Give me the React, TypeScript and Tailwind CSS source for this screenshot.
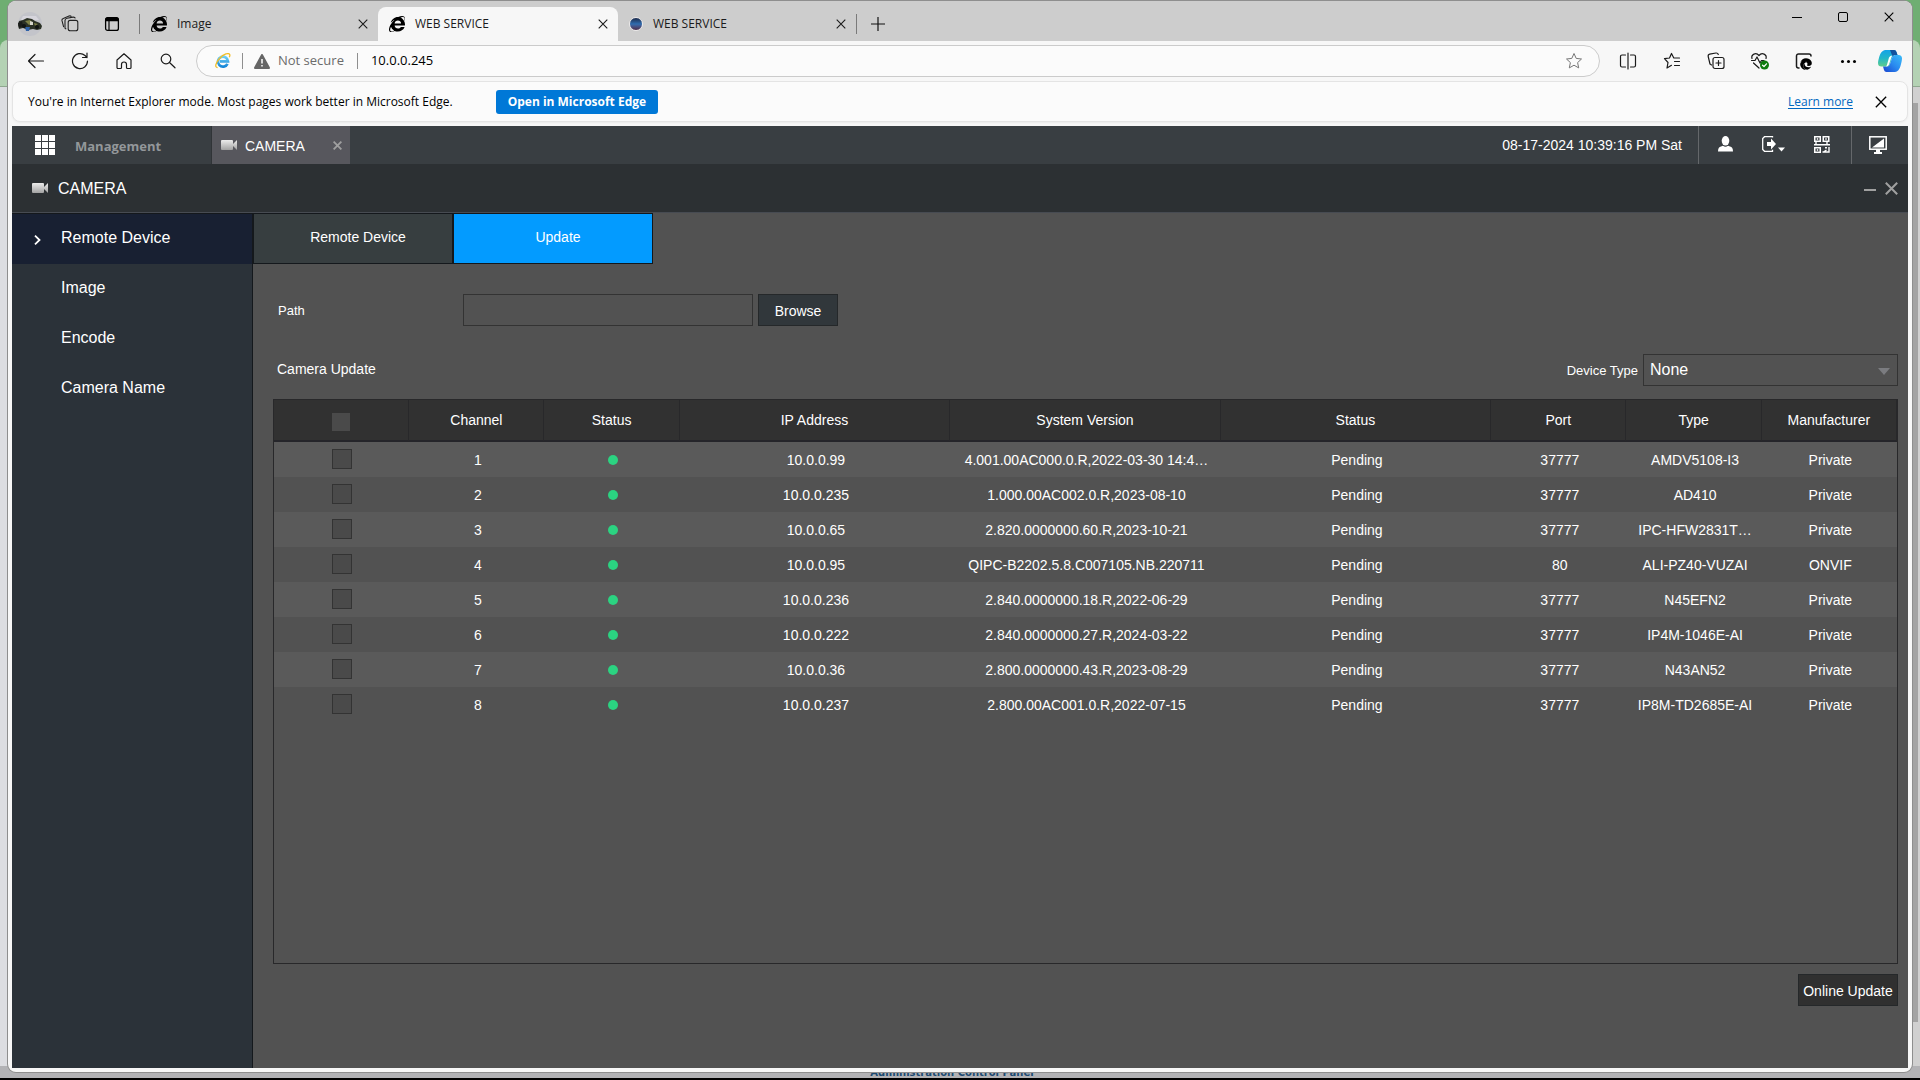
import React from "react";
import { FaInternetExplorer, FaEdge } from "react-icons/fa";

type IconProps = { className?: string };

const Cross = ({ className }: IconProps) => (
  <svg viewBox="0 0 10 10" className={className} fill="none" stroke="currentColor" aria-hidden="true">
    <path d="M.7 .7 9.3 9.3M9.3 .7 .7 9.3" strokeWidth="1.1" />
  </svg>
);

const CameraIcon = () => (
  <svg width="16" height="10" viewBox="0 0 16 10" aria-hidden="true">
    <defs>
      <linearGradient id="cam" x1="0" y1="0" x2="0" y2="1">
        <stop offset="0" stopColor="#ececec" />
        <stop offset="1" stopColor="#a2a2a2" />
      </linearGradient>
    </defs>
    <path d="M1 0h10a1 1 0 0 1 1 1v8a1 1 0 0 1-1 1H1a1 1 0 0 1-1-1V1a1 1 0 0 1 1-1zM12 4l4-4v10l-4-4z" fill="url(#cam)" />
  </svg>
);

const ProfilePicture = () => (
  <svg width="24" height="24" viewBox="0 0 24 24" aria-hidden="true">
    <circle cx="12" cy="12" r="12" fill="#c3c4ca" />
    <path d="M5 4h13l3 4H3z" fill="#d6d5dc" />
    <path d="M5 8l4-2 5 1 3 2 5 2 2 3-1 3-4 1-4-1-5 1-5-2-4 1-1-4 1-4z" fill="#2c3226" />
    <path d="M7 9l5-1 3 3-4 2zM16 11l4 1-3 2z" fill="#7d8046" />
    <path d="M0 11l4-2 1 5-4 2z" fill="#1a1d1a" />
    <path d="M12 9l3 1v3h-3z" fill="#d7d7cc" />
    <path d="M7 15h5l-1 4H8z" fill="#2f62a8" />
    <circle cx="19" cy="15" r="2" fill="#101412" />
    <circle cx="6" cy="14" r="2" fill="#101412" />
  </svg>
);

const Workspaces = () => (
  <svg width="18" height="18" viewBox="0 0 18 18" fill="none" stroke="#222" strokeWidth="1.1" aria-hidden="true">
    <rect x="7.2" y="5.4" width="9.6" height="10.4" rx="2" />
    <path d="M5.2 14.2 4 13.2V5.600a2.400 2.400 0 0 1 2-2.300l6-1.200q2-.2 2.300 1.200" />
    <path d="M2.700 12.200 1 5.700a2 2 0 0 1 1.300-2.300L8 1q1.500-.5 2.500.600" />
  </svg>
);

const TabActions = () => (
  <svg width="16" height="16" viewBox="0 0 16 16" aria-hidden="true">
    <rect x="1.600" y="1.600" width="12.800" height="12.800" rx="2" fill="none" stroke="#000" strokeWidth="1.300" />
    <path d="M1.500 5.200V3a1.500 1.500 0 0 1 1.500-1.500h10a1.500 1.500 0 0 1 1.500 1.500v2.200z" fill="#000" />
    <path d="M5 5v9" stroke="#000" strokeWidth="1.200" />
  </svg>
);

const BlackE = () => <FaInternetExplorer className="size-4 shrink-0 text-black" aria-hidden="true" />;

const BlueE = () => (
  <svg width="16" height="16" viewBox="0 0 16 16" fill="none" aria-hidden="true">
    <defs>
      <linearGradient id="ie" x1="0" y1="0" x2="0" y2="1">
        <stop offset="0" stopColor="#6fd0f6" />
        <stop offset="1" stopColor="#1687d8" />
      </linearGradient>
    </defs>
    <path d="M12.500 10.800A5 5 0 1 1 13 8.300H5" stroke="url(#ie)" strokeWidth="2.700" />
    <path d="M2.600 14.600C-.5 14.500.5 10 4.500 5.500S14-.8 14.800 1.700c.2.800 0 1.700-.5 2.600" stroke="#f2bd27" strokeWidth="1.300" />
  </svg>
);

const Star = ({ className }: IconProps) => (
  <svg width="18" height="18" viewBox="0 0 18 18" fill="none" stroke="currentColor" strokeLinejoin="round" className={className} aria-hidden="true">
    <path d="M9 1.500l2.200 4.900 5.300.6-3.900 3.600 1.100 5.300L9 13.200l-4.700 2.700 1.100-5.300L1.500 7l5.300-.6z" />
  </svg>
);

const I = ({ children, w = 18 }: { children: React.ReactNode; w?: number }) => (
  <svg width={w} height="18" viewBox={`0 0 ${w} 18`} fill="none" stroke="#1b1b1b" strokeWidth="1.200" strokeLinejoin="round" strokeLinecap="round" aria-hidden="true">
    {children}
  </svg>
);

const Copilot = () => (
  <svg width="24" height="24" viewBox="0 0 24 24" aria-hidden="true">
    <defs>
      <linearGradient id="cpA" x1="0" y1="0" x2="0" y2="1">
        <stop offset="0" stopColor="#14a3e8" />
        <stop offset=".5" stopColor="#22b6c8" />
        <stop offset="1" stopColor="#5fce8b" />
      </linearGradient>
      <linearGradient id="cpB" x1="1" y1="0" x2="0" y2="1">
        <stop offset="0" stopColor="#3bbdf8" />
        <stop offset=".5" stopColor="#2a8bf0" />
        <stop offset="1" stopColor="#1844cf" />
      </linearGradient>
    </defs>
    <path d="M7 1h9q2 0 2.500 2L19.500 6H17q-2 0-3 3l-2 6q-1 2.500-3 2.500H3.500Q0 17.500 0 14q0-2 1.500-7T7 1z" fill="url(#cpA)" />
    <path d="M12 1h4q2 0 2.500 2L19.500 6H17q-1.500 0-2.500 1.500z" fill="#14529e" />
    <path d="M17 6h3.500Q24 6 24 9.500q0 2-1.500 7.500T17 23H8.500q-2 0-2.500-2l-1-3.500h4q2 0 3-2.500l2-6q1-3 3-3z" fill="url(#cpB)" />
    <path d="M11 8.500q1-2 3.500-2-1 1-1.500 3l-2 6q-.7 2-3 2 .8-1 1.200-2.500z" fill="#fff" />
  </svg>
);

const qrCorner = (x: number, y: number) => (
  <g key={`${x}-${y}`}>
    <rect x={x + 0.75} y={y + 0.75} width="5.500" height="4.500" fill="none" stroke="#fff" strokeWidth="1.500" />
    <rect x={x + 2.8} y={y + 2.2} width="1.400" height="1.600" fill="#fff" />
  </g>
);

const menu = ["Remote Device", "Image", "Encode", "Camera Name"];

const columns = ["Channel", "Status", "IP Address", "System Version", "Status", "Port", "Type", "Manufacturer"];

const rows = [
  ["10.0.0.99", "4.001.00AC000.0.R,2022-03-30 14:4…", "37777", "AMDV5108-I3", "Private"],
  ["10.0.0.235", "1.000.00AC002.0.R,2023-08-10", "37777", "AD410", "Private"],
  ["10.0.0.65", "2.820.0000000.60.R,2023-10-21", "37777", "IPC-HFW2831T…", "Private"],
  ["10.0.0.95", "QIPC-B2202.5.8.C007105.NB.220711", "80", "ALI-PZ40-VUZAI", "ONVIF"],
  ["10.0.0.236", "2.840.0000000.18.R,2022-06-29", "37777", "N45EFN2", "Private"],
  ["10.0.0.222", "2.840.0000000.27.R,2024-03-22", "37777", "IP4M-1046E-AI", "Private"],
  ["10.0.0.36", "2.800.0000000.43.R,2023-08-29", "37777", "N43AN52", "Private"],
  ["10.0.0.237", "2.800.00AC001.0.R,2022-07-15", "37777", "IP8M-TD2685E-AI", "Private"],
];

function Backdrop() {
  return (
    <div className="absolute inset-0 flex flex-col overflow-hidden bg-[#6fae72]">
      <div className="h-10 shrink-0" />
      <div className="h-[46px] shrink-0 rounded-t-lg bg-[#b4d2b4]" />
      <div className="flex flex-1 justify-end border-t border-[#8fa890] bg-[#dcdde1]">
        <div className="flex w-2 flex-col bg-[#d0d0d0] pt-4 pb-11">
          <div className="mr-0.5 flex-1 bg-[#a3a3a3]" />
        </div>
      </div>
      <div className="flex h-3 shrink-0 items-end justify-center bg-[#b2b2b5] pr-4">
        <a href="#admin" className="font-['DejaVu_Sans',sans-serif] text-[10px] leading-[10px] font-bold text-[#1c4a72]">
          Administration Control Panel
        </a>
      </div>
      <div className="h-0.5 shrink-0 bg-black" />
    </div>
  );
}

function TabStrip() {
  return (
    <div className="flex h-10 items-stretch bg-[#cdcdcd] text-xs text-[#1b1b1b]">
      <div className="flex items-center pt-1.5">
        <button aria-label="Profile" className="flex w-11 justify-center"><ProfilePicture /></button>
        <button aria-label="Workspaces" className="flex w-9 justify-center"><Workspaces /></button>
        <button aria-label="Tab actions" className="flex w-12 justify-center"><TabActions /></button>
        <span className="ml-[3px] h-5 w-px bg-[#7a7a7a]" />
      </div>
      <div className="flex w-[238px] items-center pt-1.5 pr-2.5 pl-[11px]">
        <BlackE />
        <span className="ml-2.5 flex-1">Image</span>
        <button aria-label="Close tab"><Cross className="size-2.5" /></button>
      </div>
      <div className="mt-1.5 flex w-60 items-center rounded-t-lg bg-[#f7f7f7] pr-2.5 pl-[11px]">
        <BlackE />
        <span className="ml-2.5 flex-1">WEB SERVICE</span>
        <button aria-label="Close tab"><Cross className="size-2.5" /></button>
      </div>
      <div className="flex w-[238px] items-center pt-1.5 pr-2.5 pl-[11px]">
        <span className="size-3.5 rounded-full border border-[#eceaea] bg-linear-to-b from-[#1c2b4c] via-[#2e6db0] to-[#4a2c4c]" />
        <span className="ml-2.5 flex-1">WEB SERVICE</span>
        <button aria-label="Close tab"><Cross className="size-2.5" /></button>
      </div>
      <div className="flex items-center pt-1.5">
        <span className="h-5 w-px bg-[#7a7a7a]" />
        <button aria-label="New tab" className="ml-3.5">
          <svg width="14" height="14" viewBox="0 0 14 14" stroke="#111" strokeWidth="1.200" aria-hidden="true"><path d="M7 0v14M0 7h14" /></svg>
        </button>
      </div>
      <div className="ml-auto flex h-8 items-center">
        <button aria-label="Minimize" className="flex w-[46px] justify-center"><span className="h-px w-2.5 bg-black" /></button>
        <button aria-label="Maximize" className="flex w-[46px] justify-center"><span className="size-2.5 rounded-[2px] border border-black" /></button>
        <button aria-label="Close" className="flex w-[46px] justify-center"><Cross className="size-2.5 text-black" /></button>
      </div>
    </div>
  );
}

const tool = "flex w-11 shrink-0 items-center justify-center";

function AddressRow() {
  return (
    <div className="flex h-10 items-center bg-[#f7f7f7] pl-1.5">
      <button aria-label="Back" className={tool}><I><path d="M16.500 9H1.500M8 2.500 1.500 9 8 15.500" /></I></button>
      <button aria-label="Refresh" className={tool}><I><path d="M16.500 9A7.500 7.500 0 1 1 14 3.500L16 5.500M16 1v4.500h-4.500" /></I></button>
      <button aria-label="Home" className={tool}>
        <I><path d="M2 8 9 1.800 16 8v7.500a1 1 0 0 1-1 1h-2.500a1 1 0 0 1-1-1v-3a2.500 2.500 0 0 0-5 0v3a1 1 0 0 1-1 1H3a1 1 0 0 1-1-1z" /></I>
      </button>
      <button aria-label="Search" className={tool}><I><circle cx="7" cy="7" r="4.800" /><path d="M10.500 10.500 16 15.800" /></I></button>
      <div className="mx-1.5 flex h-8 flex-1 items-center rounded-full border border-[#cbcbcb] bg-[#fbfbfb] pr-4 pl-[18px] text-[13px]">
        <BlueE />
        <span className="mx-[11px] h-4 w-px bg-[#8f8f8f]" />
        <svg width="16" height="15" viewBox="0 0 16 15" aria-hidden="true">
          <path d="M7 .7a1.200 1.200 0 0 1 2 0l6.800 12.500a1.200 1.200 0 0 1-1 1.800H1.200a1.200 1.200 0 0 1-1-1.800z" fill="#666" />
          <path d="M8 5v4.500M8 11v1.600" stroke="#fff" strokeWidth="1.500" />
        </svg>
        <span className="ml-2 text-[#6b6b6b]">Not secure</span>
        <span className="mx-[13px] h-4 w-px bg-[#8f8f8f]" />
        <input aria-label="Address" defaultValue="10.0.0.245" className="min-w-0 flex-1 bg-transparent text-black outline-none" />
        <button aria-label="Add to favorites"><Star className="text-[#767676]" /></button>
      </div>
      <button aria-label="Split screen" className={tool}>
        <I><path d="M6.500 3H3a1.500 1.500 0 0 0-1.500 1.500v9A1.500 1.500 0 0 0 3 15h3.500M11.500 3H15a1.500 1.500 0 0 1 1.500 1.500v9A1.500 1.500 0 0 1 15 15h-3.500M9 1v16" /></I>
      </button>
      <button aria-label="Favorites" className={tool}>
        <I><path d="M16.500 6H10.800L8.500 1.500 6.500 6l-5 .7L5 10.500 4 16l4.500-2.700M11.500 9.500h5M11.500 13.500h5" /></I>
      </button>
      <button aria-label="Collections" className={tool}>
        <I>
          <rect x="6" y="5.500" width="11" height="11" rx="2" />
          <path d="M11.500 8.500v5M9 11h5M4.500 13 3 12 1.200 4.500a2 2 0 0 1 1.500-2.300L9 1q1.800-.2 2.300 1.500" />
        </I>
      </button>
      <button aria-label="Browser essentials" className={tool}>
        <I w={20}>
          <path d="M1.500 8.500H5L7 5l3 6 1.500-2.500H14M2 6.500C.8 2.500 6-.2 9 3.500c3-3.700 8.200-1 7 3M3.500 11 9 16" />
          <circle cx="14.500" cy="13" r="4.500" fill="#107c10" stroke="none" />
          <path d="M12.500 13.200l1.500 1.300 2.500-2.700" stroke="#fff" />
        </I>
      </button>
      <button aria-label="Internet Explorer mode" className={`${tool} relative`}>
        <I><path d="M4 16H3.500a2 2 0 0 1-2-2V4a2 2 0 0 1 2-2H14a2 2 0 0 1 2 2" strokeWidth="1.500" /></I>
        <FaEdge className="absolute top-1.5 left-[18px] size-3 text-black" aria-hidden="true" />
      </button>
      <button aria-label="Settings and more" className={`${tool} gap-[3px]`}>
        <span className="size-[3px] rounded-full bg-black" />
        <span className="size-[3px] rounded-full bg-black" />
        <span className="size-[3px] rounded-full bg-black" />
      </button>
      <button aria-label="Copilot" className="flex w-[42px] shrink-0 justify-center pr-0.5"><Copilot /></button>
    </div>
  );
}

function ModeBar() {
  return (
    <div className="mx-1 mb-1 flex h-[41px] items-center rounded-lg border border-[#e4e4e4] bg-[#fbfbfb] px-[15px] text-xs text-black shadow-xs">
      <span>You&apos;re in Internet Explorer mode. Most pages work better in Microsoft Edge.</span>
      <button className="ml-[43px] h-6 rounded-[3px] bg-[#0078d7] px-3 font-bold text-white">Open in Microsoft Edge</button>
      <a href="#learn" className="ml-auto text-[#0067c0] underline underline-offset-2">Learn more</a>
      <button aria-label="Dismiss" className="mr-[5px] ml-[22px]"><Cross className="size-3" /></button>
    </div>
  );
}

function AppBar() {
  return (
    <div className="flex h-[38px] items-stretch bg-[#393e42] text-sm text-white">
      <button className="flex w-[200px] items-center border-r border-[#303437] pl-[23px] font-['Open_Sans',sans-serif] text-[13px] font-bold text-[#93979a]">
        <span className="mr-5 grid grid-cols-3 gap-px">
          {Array.from({ length: 9 }, (_, i) => <span key={i} className="size-1.5 bg-white" />)}
        </span>
        <span className="pt-0.5">Management</span>
      </button>
      <div className="flex w-[138px] items-center bg-[#57575d] pr-2 pl-[9px]">
        <CameraIcon />
        <span className="ml-2 flex-1 pt-0.5">CAMERA</span>
        <button aria-label="Close CAMERA" className="text-[#a0a0a0]">
          <svg width="9" height="9" viewBox="0 0 9 9" stroke="currentColor" strokeWidth="1.800" aria-hidden="true"><path d="M.6 .6 8.400 8.400M8.400 .6 .6 8.400" /></svg>
        </button>
      </div>
      <span className="ml-auto flex items-center border-r border-[#65686b] pr-4">08-17-2024 10:39:16 PM Sat</span>
      <div className="flex w-[153px] items-center border-r border-[#65686b] pb-0.5 pl-[19px]">
        <button aria-label="User">
          <svg width="15" height="16" viewBox="0 0 15 16" fill="#fff" aria-hidden="true">
            <ellipse cx="7.500" cy="4.800" rx="3.800" ry="4.800" />
            <path d="M0 15.500q0-4.500 3-5l2-.7q2.500 2 5 0l2 .7q3 .5 3 5z" />
          </svg>
        </button>
        <button aria-label="Log out" className="ml-[29px]">
          <svg width="24" height="16" viewBox="0 0 24 16" aria-hidden="true">
            <path d="M10.500 1.600V.7H2.500L.7 2.500v11l1.800 1.800h8v-1.500" fill="none" stroke="#fff" strokeWidth="1.300" />
            <path d="M5 6h4V2.500L14 8l-5 5.500V10H5z" fill="#fff" />
            <path d="M16 11.500h7l-3.500 4z" fill="#fff" />
          </svg>
        </button>
        <button aria-label="QR code" className="ml-7">
          <svg width="16" height="17" viewBox="0 0 16 17" aria-hidden="true">
            {qrCorner(0, 0)}
            {qrCorner(8.5, 0)}
            {qrCorner(0, 11)}
            <path d="M0 8.700h16M2 6v2M13 6v2M15 11v5H8.500M13 11.800h-2M12.500 14l-3 2" stroke="#fff" strokeWidth="1.400" fill="none" />
          </svg>
        </button>
      </div>
      <button aria-label="Display" className="flex w-14 items-center pl-[17px]">
        <svg width="18" height="18" viewBox="0 0 18 18" aria-hidden="true">
          <rect x=".8" y=".8" width="16.400" height="12.400" fill="none" stroke="#fff" strokeWidth="1.500" />
          <path d="M15 2.500v9H3zM7 13h4v3h2v2H5v-2h2z" fill="#fff" />
        </svg>
      </button>
    </div>
  );
}

const headCell = "h-[42px] border-r border-b-2 border-r-[#28282a] border-b-[#25252a] p-0 font-normal";
const cell = "truncate p-0 pl-0.5";

function DeviceTable() {
  return (
    <div className="min-h-80 flex-1 border border-[#28282a]">
      <table className="w-full table-fixed border-separate border-spacing-0 text-center text-sm">
        <colgroup>
          <col className="w-1/12" />
          <col className="w-1/12" />
          <col className="w-1/12" />
          <col className="w-1/6" />
          <col className="w-1/6" />
          <col className="w-1/6" />
          <col className="w-1/12" />
          <col className="w-1/12" />
          <col className="w-1/12" />
        </colgroup>
        <thead>
          <tr className="bg-[#313131]">
            <th className={headCell}>
              <input type="checkbox" aria-label="Select all channels" className="mt-0.5 size-[18px] appearance-none bg-[#4a4a4a] align-middle" />
            </th>
            {columns.map((c, i) => (
              <th key={i} className={headCell}>{c}</th>
            ))}
          </tr>
        </thead>
        <tbody>
          {rows.map(([ip, version, port, type, maker], i) => (
            <tr key={ip} className="h-[35px] odd:bg-[#5a5a5a]">
              <td className="p-0 pb-px">
                <input
                  type="checkbox"
                  aria-label={`Select channel ${i + 1}`}
                  className="block mx-auto size-5 appearance-none border border-[#333333] bg-[#4a4a4a]"
                />
              </td>
              <td className={cell}>{i + 1}</td>
              <td className={cell}><span className="mx-auto block size-2.5 rounded-full bg-[#2bd381]" /></td>
              <td className={cell}>{ip}</td>
              <td className={cell}>{version}</td>
              <td className={cell}>Pending</td>
              <td className={cell}>{port}</td>
              <td className={cell}>{type}</td>
              <td className={cell}>{maker}</td>
            </tr>
          ))}
        </tbody>
      </table>
    </div>
  );
}

export default function App() {
  return (
    <div className="relative flex min-h-screen flex-col px-2 pt-px pb-2 font-['Open_Sans',sans-serif]">
      <Backdrop />
      <div className="relative flex flex-1 flex-col overflow-hidden rounded-lg bg-[#f7f7f7] shadow-[0_0_0_1px_#8e8e8e]">
        <TabStrip />
        <AddressRow />
        <ModeBar />
        <div className="mx-1 mb-1 flex flex-1 flex-col bg-[#525252] font-['Liberation_Sans',Arial,sans-serif] text-white">
          <AppBar />
          <div className="flex h-[49px] items-center border-b border-[#474b52] bg-[#2c3033] pr-2.5 pl-5">
            <CameraIcon />
            <h1 className="ml-2.5 flex-1 pt-0.5 text-base">CAMERA</h1>
            <button aria-label="Minimize panel" className="mr-[9px] pt-1"><span className="block h-0.5 w-3 bg-[#a0a0a0]" /></button>
            <button aria-label="Close panel" className="text-[#a0a0a0]">
              <svg width="13" height="13" viewBox="0 0 13 13" stroke="currentColor" strokeWidth="2" aria-hidden="true"><path d="M.8 .8 12.200 12.200M12.200 .8 .8 12.200" /></svg>
            </button>
          </div>
          <div className="flex flex-1">
            <nav className="w-[241px] shrink-0 border-r border-[#14181c] bg-[#2b3239]">
              {menu.map((m, i) => (
                <a
                  key={m}
                  href="#menu"
                  className={`flex items-center pb-0.5 pl-[49px] text-base ${i === 0 ? "relative h-[51px] border-t border-[#14181c] bg-[#182032]" : "h-[50px]"}`}
                >
                  {i === 0 && (
                    <svg width="7" height="10" viewBox="0 0 7 10" fill="none" stroke="#fff" strokeWidth="1.800" className="absolute left-[22px] mt-1" aria-hidden="true">
                      <path d="M1 .7 5.500 5 1 9.300" />
                    </svg>
                  )}
                  {m}
                </a>
              ))}
            </nav>
            <main className="flex min-w-0 flex-1 flex-col pr-[10px] pb-[62px]">
              <div className="flex text-sm">
                <button className="h-[51px] w-[200px] border border-[#14181c] bg-[#373e40] pb-1 pl-2.5">Remote Device</button>
                <button className="h-[51px] w-[200px] border border-[#14181c] bg-[#039bff] pb-1 pl-2.5">Update</button>
              </div>
              <div className="mt-[30px] flex items-center pl-[25px]">
                <label htmlFor="path" className="w-[185px] pt-0.5 text-[13px]">Path</label>
                <input id="path" className="h-8 w-[290px] border border-[#333333] bg-transparent px-2 outline-none" />
                <button className="ml-[5px] h-8 w-20 border border-[#25282a] bg-[#31373b] pt-0.5 text-sm">Browse</button>
              </div>
              <div className="mt-7 flex items-center pl-6">
                <h2 className="flex-1 pb-0.5 text-sm">Camera Update</h2>
                <label htmlFor="type" className="mr-[5px] pt-0.5 text-[13px]">Device Type</label>
                <div className="relative">
                  <select id="type" className="h-8 w-[255px] appearance-none border border-[#333333] bg-[#525252] px-1.5 text-base outline-none">
                    <option>None</option>
                  </select>
                  <svg width="12" height="7" viewBox="0 0 12 7" className="pointer-events-none absolute top-3.5 right-2" aria-hidden="true">
                    <path d="M0 0h12L6 7z" fill="#7b7c80" />
                  </svg>
                </div>
              </div>
              <div className="mt-[13px] ml-5 flex flex-1 flex-col">
                <DeviceTable />
                <button className="mt-2.5 h-8 w-[100px] self-end border border-[#25282a] bg-[#303030] pt-0.5 text-sm whitespace-nowrap">Online Update</button>
              </div>
            </main>
          </div>
        </div>
      </div>
    </div>
  );
}
